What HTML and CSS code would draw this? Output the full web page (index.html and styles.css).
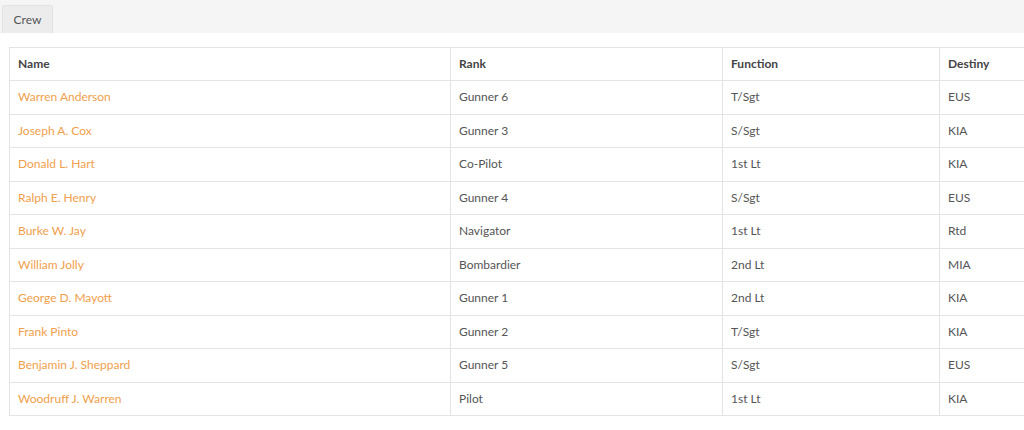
FILE: index.html
```html
<!DOCTYPE html>
<html>
<head>
<meta charset="utf-8">
<link rel="stylesheet" href="styles.css">
</head>
<body>
<div class="tabs">
  <div class="tab">Crew</div>
</div>
<div class="content">
  <table class="crew">
    <colgroup>
      <col class="c-name"><col class="c-rank"><col class="c-func"><col class="c-dest">
    </colgroup>
    <thead>
      <tr><th>Name</th><th>Rank</th><th>Function</th><th>Destiny</th></tr>
    </thead>
    <tbody>
      <tr><td><a href="#">Warren Anderson</a></td><td>Gunner 6</td><td>T/Sgt</td><td>EUS</td></tr>
      <tr><td><a href="#">Joseph A. Cox</a></td><td>Gunner 3</td><td>S/Sgt</td><td>KIA</td></tr>
      <tr><td><a href="#">Donald L. Hart</a></td><td>Co-Pilot</td><td>1st Lt</td><td>KIA</td></tr>
      <tr><td><a href="#">Ralph E. Henry</a></td><td>Gunner 4</td><td>S/Sgt</td><td>EUS</td></tr>
      <tr><td><a href="#">Burke W. Jay</a></td><td>Navigator</td><td>1st Lt</td><td>Rtd</td></tr>
      <tr><td><a href="#">William Jolly</a></td><td>Bombardier</td><td>2nd Lt</td><td>MIA</td></tr>
      <tr><td><a href="#">George D. Mayott</a></td><td>Gunner 1</td><td>2nd Lt</td><td>KIA</td></tr>
      <tr><td><a href="#">Frank Pinto</a></td><td>Gunner 2</td><td>T/Sgt</td><td>KIA</td></tr>
      <tr><td><a href="#">Benjamin J. Sheppard</a></td><td>Gunner 5</td><td>S/Sgt</td><td>EUS</td></tr>
      <tr><td><a href="#">Woodruff J. Warren</a></td><td>Pilot</td><td>1st Lt</td><td>KIA</td></tr>
    </tbody>
  </table>
</div>
</body>
</html>
```

FILE: styles.css
```css
html, body {
  margin: 0;
  padding: 0;
  background: #fff;
  overflow: hidden;
}
body {
  font-family: Lato, "Open Sans", sans-serif;
  font-size: 12px;
  color: #555;
  width: 1024px;
}
.tabs {
  background: #f5f5f5;
  height: 33px;
  display: flex;
  align-items: flex-end;
  padding-left: 2px;
  box-sizing: border-box;
}
.tab {
  height: 28px;
  width: 51px;
  box-sizing: border-box;
  background: #ececec;
  border: 1px solid #e2e2e2;
  border-bottom: none;
  border-radius: 3px 3px 0 0;
  color: #555;
  display: flex;
  align-items: center;
  justify-content: center;
  font-size: 12px;
}
.content {
  padding: 14px 0 0 9px;
  overflow: hidden;
}
.crew {
  border-collapse: collapse;
  table-layout: fixed;
  width: 1100px;
}
.c-name { width: 441px; }
.c-rank { width: 272px; }
.c-func { width: 217px; }
.c-dest { width: 170px; }
.crew th, .crew td {
  border: 1px solid #e4e4e4;
  padding: 8px 8px;
  line-height: 16.45px;
  text-align: left;
  white-space: nowrap;
}
.crew th {
  font-weight: bold;
  color: #444;
}
.crew a {
  color: #f0a04b;
  text-decoration: none;
}
```
